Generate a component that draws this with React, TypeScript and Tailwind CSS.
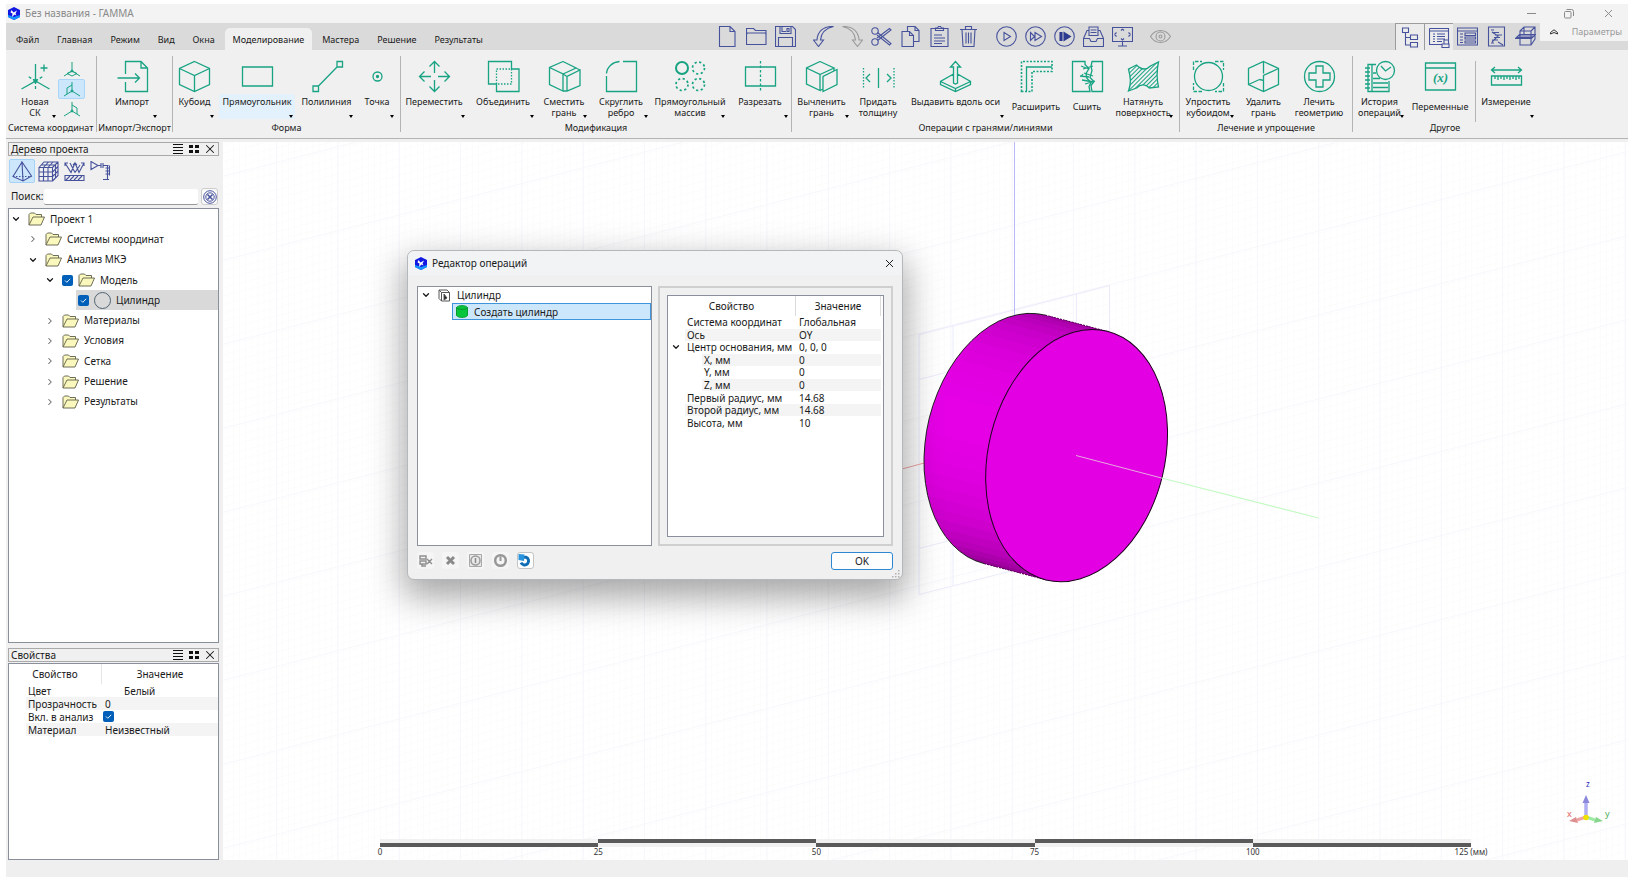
import { useState, type ReactNode } from 'react';
import { ChevronDown, ChevronRight, X } from 'lucide-react';

/* ---------- Icons ---------- */

const RibbonIcon = ({ children }: { children: ReactNode }) => (
  <svg width="31" height="31" viewBox="0 0 31 31" fill="none" stroke="#18a383" strokeWidth="1.3" className="shrink-0 overflow-visible">
    {children}
  </svg>
);

const ToolIcon = ({ children, muted = false }: { children: ReactNode; muted?: boolean }) => (
  <svg width="21" height="21" viewBox="0 0 21 21" fill="none" stroke={muted ? '#9a9a9a' : '#46529c'} strokeWidth="1.1" className="shrink-0">
    {children}
  </svg>
);

const icons: Record<string, ReactNode> = {
  newCs: (
    <>
      <path d="M15.500 3v17L1.500 28M15.500 20l14 8M24 3.500v7M20.500 7h7" />
      <path d="M15.500 20l-8-5M15.500 20l8-5M15.500 20v8" strokeDasharray="3 2" />
      <circle cx="15.500" cy="20" r="1.400" fill="#18a383" />
    </>
  ),
  import: <path d="M8.500 13V.5H24l6.500 6.500v23.500h-22V21M24 .5V7h6.500M.5 17h22M18 12.500l4.500 4.500-4.500 4.500" />,
  cuboid: <path d="M15.500.5L30.500 7.500v16l-15 7-15-7v-16zM.5 7.500l15 7 15-7M15.500 14.500v16" />,
  rect: <path d="M.5 6h30v19H.5z" />,
  polyline: <path d="M2 25h5.500v5.500H2zM26 .5h5.500V6H26zM7.500 25L26 6" />,
  point: (
    <>
      <circle cx="15.500" cy="15.500" r="4.500" />
      <circle cx="15.500" cy="15.500" r="1" fill="#18a383" />
    </>
  ),
  move: <path d="M15.500 12V.5M10.500 5.500l5-5 5 5M15.500 19v11.500M10.500 25.500l5 5 5-5M12 15.500H.5M5.500 10.500l-5 5 5 5M19 15.500h11.500M25.500 10.500l5 5-5 5" />,
  union: (
    <>
      <path d="M.5.5h23V8h7.500v22.500H8.500V23H.5z" />
      <path d="M8.500 8h15v15h-15z" strokeDasharray="1.500 1.500" />
    </>
  ),
  shiftFace: (
    <path d="M14 .5L.5 6.500v17L14 30V13L.5 6.500M14 .5l13 6.500L14 13M18 30V15.500l13-6.500v15.500L18 30h-4M27 7l4 2M18 15.500L14 13" />
  ),
  fillet: <path d="M.5 15v15.500h30V.5H17M.5 12.500C1 6 6.500 1 13.500.5" />,
  array: (
    <>
      <circle cx="7" cy="7" r="6" strokeWidth="2" />
      <circle cx="23.500" cy="7" r="6" strokeWidth="1.700" strokeDasharray="2.200 2.500" />
      <circle cx="7" cy="23.500" r="6" strokeWidth="1.700" strokeDasharray="2.200 2.500" />
      <circle cx="23.500" cy="23.500" r="6" strokeWidth="1.700" strokeDasharray="2.200 2.500" />
    </>
  ),
  cut: (
    <>
      <path d="M.5 6h30v19H.5z" />
      <path d="M15.500 0v31" strokeDasharray="2.500 2" />
    </>
  ),
  extractFace: (
    <path d="M14 .5L.5 7v16L14 29.500V13.500L.5 7M14 .5L28 7l-14 6.500M17 30.500v-15L31 8.500v15zM28 7v2.500M14 29.500l3-1.500" />
  ),
  thickness: (
    <>
      <path d="M.5 7v20M31 7v20" strokeDasharray="1.500 1.500" />
      <path d="M15.500 7v20M7 13l-4 4 4 4M24 13l4 4-4 4" />
    </>
  ),
  extrude: (
    <path d="M13.500 13L.5 20.500v3l15 7 15-7v-3L17.500 13M.5 20.500l15 7 15-7M15.500 27.500v3M13.500 22V6h-3l5-5.500 5 5.500h-3v16l-2 1z" />
  ),
  expand: (
    <>
      <path d="M.5 30.500V.5h30.500v10H11v20z" strokeDasharray="2 1.500" strokeWidth="1.600" />
      <path d="M5.500 30.500V6h25.500" />
    </>
  ),
  sew: (
    <>
      <path d="M13 .5H.5v30H18l-1-5 2-4-4-4-1-5 3-5-4-4zM20 .5h10.500v30H20l-1-6 3-4-4-4 2-7-1-4z" />
      <path d="M9 5l8 3M11 8l10-3M8 15l9 1M12 12l9 3M10 19l12 2M13 23l10-3M11 13l-2 3" />
    </>
  ),
  stretch: <path d="M.5 8l8-4c5 5 10 5 14 1l8-4c-2 9-2 16 0 25l-9 1c-4-4-9-4-13 0L.5 30c3-8 2-14 0-22z" fill="url(#hatch)" />,
  simplify: (
    <>
      <circle cx="15.500" cy="15.500" r="14" />
      <path d="M.5 9V.5H9M22 .5h8.500V9M30.500 22v8.500H22M9 30.500H.5V22" strokeDasharray="3.500 1.500" />
    </>
  ),
  deleteFace: <path d="M15.500.5l15 7v16l-15 7-15-7v-16zM15.500.5v12M15.500 18v12.500M.5 23.500l11-5M30.500 7.500l-15 7v5l-4-1" />,
  heal: (
    <>
      <circle cx="15.500" cy="15.500" r="15" />
      <path d="M12 5h7v7h7v7h-7v7h-7v-7H5v-7h7z" />
    </>
  ),
  history: (
    <>
      <path d="M12 3.500H4v27h21V20M8 3.500v27M12 12h-3M9 17.500h7M9 22h15M9 26.500h15" />
      <path d="M1 7h5M1 11h5M1 15h5M1 19h5M1 23h5M1 27h5" />
      <circle cx="21.500" cy="9.500" r="9" />
      <path d="M17 5l4.500 5L27 6" />
    </>
  ),
  variables: (
    <>
      <path d="M.5 2h30v27H.5zM.5 7h30" />
      <text x="15.500" y="21" textAnchor="middle" stroke="none" fill="#18a383" className="font-['Liberation_Serif',serif] text-[13px] font-bold italic">
        (x)
      </text>
    </>
  ),
  measure: (
    <path d="M.5 9h30M4 6L.5 9 4 12M27 6l3.500 3L27 12M.5 15h30v9H.5zM4 15v3M7 15v4M10 15v3M13 15v4M16 15v3M19 15v4M22 15v3M25 15v4M28 15v3" />
  ),
};

const AppLogo = () => (
  <svg width="12" height="13" viewBox="0 0 12 13" className="shrink-0">
    <path d="M6 0l6 3v7l-6 3-6-3V3z" fill="#1219e0" />
    <path d="M0 8l6 2 6-2v2l-6 3-6-3z" fill="#1595ff" />
    <path d="M3.500 3l2 2.500 3.500-2-1.500 3 1 2-2-1-2.500 2.500.5-3.500-2-1z" fill="#fff" />
  </svg>
);

const Folder = () => (
  <svg width="17" height="14" viewBox="0 0 17 14" className="shrink-0" fill="#fbf8bd" stroke="#5f5f4a" strokeWidth="0.900">
    <path d="M1 13V2.500L2.500 1h4L8 2.500h5.500V5" />
    <path d="M1 13L5 5h11.500l-3.500 8z" />
  </svg>
);

/* ---------- Small controls ---------- */

const Check = ({ label }: { label: string }) => (
  <label className="grid shrink-0 place-items-center" aria-label={label}>
    <input type="checkbox" defaultChecked aria-label={label} className="size-[11px] appearance-none rounded-[2px] bg-[#bbb] [grid-area:1/1] checked:bg-[#005fb8]" />
    <svg width="7" height="7" viewBox="0 0 7 7" className="pointer-events-none [grid-area:1/1]" fill="none" stroke="#fff" strokeWidth="0.900">
      <path d="M1 3.500l1.800 1.800L6.200 1.800" />
    </svg>
  </label>
);

const Arrow = () => <span className="absolute right-[2px] bottom-[1px] border-x-[2px] border-t-[3px] border-x-transparent border-t-black" />;

interface RibbonItem {
  icon: string;
  lines: string[];
  width: string;
  arrow?: boolean;
  low?: boolean;
  active?: boolean;
}

const RibbonButton = ({ icon, lines, width, arrow, low, active }: RibbonItem) => (
  <button className={`flex shrink-0 flex-col items-center ${width}`}>
    <RibbonIcon>{icons[icon]}</RibbonIcon>
    <span
      className={`relative mt-[2px] flex h-[25px] w-full flex-col items-center whitespace-nowrap leading-[11px] ${low ? 'justify-center' : 'pt-[2px]'} ${active ? 'rounded-[2px] bg-[#e3f1fc]' : ''
        }`}
    >
      {lines.map(line => (
        <span key={line}>{line}</span>
      ))}
      {arrow && <Arrow />}
    </span>
  </button>
);

interface RibbonGroup {
  title: string;
  width: string;
  items: RibbonItem[];
}

const groups: RibbonGroup[] = [
  {
    title: 'Импорт/Экспорт',
    width: 'w-[76px]',
    items: [{ icon: 'import', lines: ['Импорт'], width: 'ml-[8px] w-[54px]', arrow: true }],
  },
  {
    title: 'Форма',
    width: 'w-[228px]',
    items: [
      { icon: 'cuboid', lines: ['Кубоид'], width: 'w-[43px]', arrow: true },
      { icon: 'rect', lines: ['Прямоугольник'], width: 'w-[76px]', arrow: true, active: true },
      { icon: 'polyline', lines: ['Полилиния'], width: 'w-[57px]', arrow: true },
      { icon: 'point', lines: ['Точка'], width: 'w-[38px]', arrow: true },
    ],
  },
  {
    title: 'Модификация',
    width: 'w-[391px]',
    items: [
      { icon: 'move', lines: ['Переместить'], width: 'w-[66px]', arrow: true },
      { icon: 'union', lines: ['Объединить'], width: 'w-[66px]', arrow: true },
      { icon: 'shiftFace', lines: ['Сместить', 'грань'], width: 'w-[50px]', arrow: true },
      { icon: 'fillet', lines: ['Скруглить', 'ребро'], width: 'w-[58px]', arrow: true },
      { icon: 'array', lines: ['Прямоугольный', 'массив'], width: 'w-[74px]', arrow: true },
      { icon: 'cut', lines: ['Разрезать'], width: 'w-[60px]', arrow: true },
    ],
  },
  {
    title: 'Операции с гранями/линиями',
    width: 'w-[388px]',
    items: [
      { icon: 'extractFace', lines: ['Вычленить', 'грань'], width: 'w-[59px]', arrow: true },
      { icon: 'thickness', lines: ['Придать', 'толщину'], width: 'w-[48px]' },
      { icon: 'extrude', lines: ['Выдавить вдоль оси'], width: 'w-[101px]', arrow: true },
      { icon: 'expand', lines: ['Расширить'], width: 'w-[54px]', low: true },
      { icon: 'sew', lines: ['Сшить'], width: 'w-[42px]', low: true },
      { icon: 'stretch', lines: ['Натянуть', 'поверхность'], width: 'w-[64px]', arrow: true },
    ],
  },
  {
    title: 'Лечение и упрощение',
    width: 'w-[173px]',
    items: [
      { icon: 'simplify', lines: ['Упростить', 'кубоидом'], width: 'w-[56px]', arrow: true },
      { icon: 'deleteFace', lines: ['Удалить', 'грань'], width: 'w-[49px]' },
      { icon: 'heal', lines: ['Лечить', 'геометрию'], width: 'w-[56px]' },
    ],
  },
  {
    title: 'Другое',
    width: 'w-[185px]',
    items: [
      { icon: 'history', lines: ['История', 'операций'], width: 'w-[53px]', arrow: true },
      { icon: 'variables', lines: ['Переменные'], width: 'w-[62px]', low: true },
      { icon: 'measure', lines: ['Измерение'], width: 'ml-px w-[61px] border-l border-[#b4b4b4]', arrow: true },
    ],
  },
];

const tabs = ['Файл', 'Главная', 'Режим', 'Вид', 'Окна', 'Моделирование', 'Мастера', 'Решение', 'Результаты'];

const quickTools: { label: string; muted?: boolean; icon: ReactNode }[][] = [
  [
    { label: 'Создать', icon: <path d="M2.500.5h10.500l5 5v15h-15.500zM13 .5v5h5" /> },
    { label: 'Открыть', icon: <path d="M.5 18.500v-16h7l2 2h10.500v14zM.5 8.500l1-1.500h18l.500 1.500" /> },
    { label: 'Сохранить', icon: <path d="M.5.5h17l3 3v17H.5zM5 .5v7h11v-7M12 2.500h2v3h-2zM3.500 20.500v-9h14v9M7 .5v5h4" /> },
  ],
  [
    { label: 'Отменить', icon: <path d="M20.500.5C11 0 4.500 5 4 14H.5l5 6.500 5-6.500H7.500C8 7.500 12 2.500 20.500.5z" /> },
    { label: 'Повторить', muted: true, icon: <path d="M.5.5C10 0 16.500 5 17 14h3.500l-5 6.500-5-6.500h3C13 7.500 9 2.500.5.5z" /> },
    {
      label: 'Вырезать',
      icon: (
        <>
          <circle cx="4" cy="5" r="3.200" />
          <circle cx="4" cy="16" r="3.200" />
          <path d="M6.500 6.500l13.500 11-1.500 1.500L6 9M6.500 14.500L20 4l-1.500-1.500L6 12" />
        </>
      ),
    },
    { label: 'Копировать', icon: <path d="M7.500 5.500v-5h7.500l4 4v11h-5.500M15 .5v4h4M2 5.500h7.500l4 4v11H2zM9.500 5.500v4h4" /> },
    { label: 'Вставить', icon: <path d="M2 2.500h17v18H2zM6.500 4.500V2h2l1-1.500h2l1 1.500h2v2.500zM5 9h8M5 12h11M5 15h11M5 17.500h8" /> },
    { label: 'Удалить', icon: <path d="M2 3.500h17M7.500 3.500v-3h6v3M4 3.500l1 17h11l1-17M8 6.500v11M10.500 6.500v11M13 6.500v11" /> },
  ],
  [
    {
      label: 'Запуск',
      icon: (
        <>
          <circle cx="10.500" cy="10.500" r="9.800" />
          <path d="M8 6.500l6.500 4-6.500 4z" />
        </>
      ),
    },
    {
      label: 'Быстрый запуск',
      icon: (
        <>
          <circle cx="10.500" cy="10.500" r="9.800" />
          <path d="M5.500 6.500l4 4-4 4zM10 6.500l6.500 4-6.500 4z" />
        </>
      ),
    },
    {
      label: 'Полный запуск',
      icon: (
        <>
          <circle cx="10.500" cy="10.500" r="9.800" />
          <path d="M6 6.500h2v8H6zM10 6.500l6.500 4-6.500 4z" fill="#2c3a90" stroke="#2c3a90" />
        </>
      ),
    },
    { label: 'Архив', icon: <path d="M.5 12.500L4 4.500h2V1h9v3.500h2l3.500 8v8H.5zM.5 12.500h6l1.500 3h5l1.500-3h6M6 4.500v5h9v-5M7.500 4h6M7.500 6.500h6" /> },
    { label: 'Во весь экран', icon: <path d="M.5 1.500h20v14H.5zM10.500 15.500v4.500M6 20h9M2.500 8.500l2-2M2.500 8.500l2 2M18.500 8.500l-2-2M18.500 8.500l-2 2M10.500 3l-1.500 1.500M10.500 3l1.500 1.500M10.500 14L9 12.500M10.500 14l1.500-1.500" /> },
  ],
  [
    {
      label: 'Вид',
      muted: true,
      icon: (
        <>
          <path d="M.5 10.500c5-8 15-8 20 0-5 8-15 8-20 0z" />
          <circle cx="10.500" cy="10.500" r="4.500" />
          <circle cx="10.500" cy="10.500" r="1.500" />
        </>
      ),
    },
  ],
];

const panelTools: { label: string; pressed?: boolean; icon: ReactNode }[] = [
  { label: 'Дерево', pressed: true, icon: <path d="M2.500 1h6v4.500h-6zM10.500 8h7v4.500h-7zM10.500 15.500h7V20h-7zM5.500 5.500V18h5M5.500 10.500h5" /> },
  { label: 'Свойства', pressed: true, icon: <path d="M.5 1.500h19v11M.5 1.500v16H13M.5 4h19M4 7h2M8 7h8M4 9.500h2M8 9.500h8M4 12h2M8 12h8M4 14.500h2M8 14.500h5M15 13h4.500v4H15zM13 17h7v3.500h-7z" /> },
  { label: 'Таблица', icon: <path d="M.5 2h20v17H.5zM.5 5h20M3 8h3M3 11h3M3 14h3M3 16.500h3M8 7h10.500v2.500H8zM8 11h10.500v2H8zM8 15h10.500v2H8z" /> },
  { label: 'Журнал', icon: <path d="M2.500 1H18.500v19H2.500zM5 4h3M6 6.500h7M9 9h7M8 11.500h6M6 14h6M5 17h3M6 6l6 4-6 6M12 16l5 3" /> },
  { label: 'Сечение', icon: <path d="M5 5l4-4h11v12l-4 6H5zM5 5h11v14M16 5l4-4M.5 12.500l4-4h16l-4 4zM2 11.500h16M3 10h16M9 1v7" /> },
];

/* ---------- Project tree ---------- */

interface TreeRow {
  label: string;
  indent: string;
  open?: boolean;
  checked?: boolean;
  leaf?: boolean;
}

const treeRows: TreeRow[] = [
  { label: 'Проект 1', indent: 'pl-[2px]', open: true },
  { label: 'Системы координат', indent: 'pl-[19px]' },
  { label: 'Анализ МКЭ', indent: 'pl-[19px]', open: true },
  { label: 'Модель', indent: 'pl-[36px]', open: true, checked: true },
  { label: 'Цилиндр', indent: 'pl-[67px]', checked: true, leaf: true },
  { label: 'Материалы', indent: 'pl-[36px]' },
  { label: 'Условия', indent: 'pl-[36px]' },
  { label: 'Сетка', indent: 'pl-[36px]' },
  { label: 'Решение', indent: 'pl-[36px]' },
  { label: 'Результаты', indent: 'pl-[36px]' },
];

const TreeItem = ({ label, indent, open, checked, leaf }: TreeRow) => (
  <li className={`flex items-center ${indent}`}>
    <div className={`flex items-center gap-[5px] ${leaf ? 'h-full flex-1 bg-[#d9d9d9] pl-[2px]' : ''}`}>
      {!leaf &&
        (open ? <ChevronDown size={10} strokeWidth={3} className="mr-[2px]" /> : <ChevronRight size={10} strokeWidth={2.5} className="mr-[2px] text-[#666]" />)}
      {checked && <Check label={label} />}
      {leaf ? <span className="size-[17px] rounded-full border border-[#4f6272]" /> : <Folder />}
      <span>{label}</span>
    </div>
  </li>
);

const PanelTitle = ({ title }: { title: string }) => (
  <div className="flex h-[14px] items-center border border-[#a9a9a9] pl-[2px] text-[10px] leading-[12px]">
    <h2 className="flex-1">{title}</h2>
    <button aria-label="Меню панели" className="px-[3px]">
      <svg width="10" height="10" viewBox="0 0 10 10" stroke="#111" strokeWidth="1">
        <path d="M0 .5h10M0 3.500h10M0 6.500h10M0 9.500h10" />
      </svg>
    </button>
    <button aria-label="Открепить" className="px-[3px]">
      <svg width="10" height="8" viewBox="0 0 10 8" fill="#111">
        <path d="M0 0h4v3H0zM6 0h4v3H6zM0 5h4v3H0zM6 5h4v3H6z" />
      </svg>
    </button>
    <button aria-label="Закрыть" className="px-px">
      <X size={14} strokeWidth={1.8} />
    </button>
  </div>
);

const LeftDock = () => (
  <aside className="flex w-[211px] shrink-0 flex-col">
    <PanelTitle title="Дерево проекта" />
    <div className="flex pt-[3px] pl-px">
      <button aria-label="Геометрия" className="grid h-6 w-[26px] place-items-center rounded-[2px] border border-[#a5d3f7] bg-[#cce6fb]">
        <ToolIcon>
          <path d="M10 1L1 15.500l10 4.500 8.500-5L10 1l1 19" />
          <path d="M1 15.500h18.500" strokeDasharray="1.500 1.500" />
        </ToolIcon>
      </button>
      <button aria-label="Сетка" className="grid h-6 w-[26px] place-items-center">
        <ToolIcon>
          <path d="M1 6.500h13.500V20H1zM1 6.500L6 1h14v13.500L14.500 20M14.500 6.500L20 1M5.500 6.500V20M10 6.500V20M1 11h13.500M1 15.500h13.500M5.500 6.500L10.500 1M10 6.500L15 1M14.500 11L20 5.500M14.500 15.500L20 10M17.500 4v13M3.500 4h14" />
        </ToolIcon>
      </button>
      <button aria-label="Условия" className="grid h-6 w-[26px] place-items-center">
        <ToolIcon>
          <path d="M1 2l6 9.500L11 2l4 9.500 5-9.500M1 5V2h3M9 4l2-2 2 2M17 2h3v3M6 2l5 9.500M16 4l-5 7.500M1 14.500h19v5H1zM2 19l4-4M6 19l4-4M10 19l4-4M14 19l4-4" />
        </ToolIcon>
      </button>
      <button aria-label="Схема" className="grid h-6 w-[26px] place-items-center">
        <ToolIcon>
          <path d="M1 .5v8l7-4zM8 4.500h3M11 2v5M13 2v5M13 4.500h5.500M17.500 4.500v14M19.500 4.500v10M15.500 7h4M15.500 10h4M15.500 13h4M13 18.500h6" />
        </ToolIcon>
      </button>
    </div>
    <div className="flex items-center pt-[5px] pb-[3px] pl-[3px] text-[10px]">
      <label htmlFor="tree-search" className="w-[33px]">Поиск:</label>
      <input id="tree-search" type="text" className="h-4 min-w-0 flex-1 rounded-[2px] border-b border-[#999] bg-white px-1 outline-none" />
      <button aria-label="Очистить поиск" className="mr-px ml-[3px] grid size-[17px] place-items-center rounded-[3px] border border-[#ccc] bg-[#fbfbfb]">
        <svg width="14" height="14" viewBox="0 0 14 14" fill="none" stroke="#46529c">
          <circle cx="7" cy="7" r="6.300" />
          <circle cx="7" cy="7" r="4.200" />
          <path d="M4.500 4.500l5 5M9.500 4.500l-5 5" strokeWidth="1.500" />
        </svg>
      </button>
    </div>
    <div className="min-h-0 flex-1 overflow-hidden border border-[#8a8f9c] bg-white">
      <ul className="grid h-[203px] auto-rows-fr text-[10px]">
        {treeRows.map(row => (
          <TreeItem key={row.label} {...row} />
        ))}
      </ul>
    </div>
    <div className="mt-[5px]">
      <PanelTitle title="Свойства" />
    </div>
    <div className="mt-px h-[197px] border border-[#8a8f9c] bg-white text-[10px] leading-[12px]">
      <table className="w-full table-fixed border-separate border-spacing-0">
        <thead>
          <tr className="h-5">
            <th className="w-[17px]" />
            <th className="w-[76px] border-r border-[#e5e5e5] pr-[17px] text-center font-normal">Свойство</th>
            <th className="text-center font-normal">Значение</th>
          </tr>
        </thead>
        <tbody className="[&_td]:h-[13px] [&_td]:py-0">
          <tr>
            <td />
            <td className="pl-[2px]">Цвет</td>
            <td className="pl-[22px]">Белый</td>
          </tr>
          <tr>
            <td />
            <td className="bg-[#f4f4f4] pl-[2px]">Прозрачность</td>
            <td className="bg-[#f4f4f4] pl-[3px]">0</td>
          </tr>
          <tr>
            <td />
            <td className="pl-[2px]">Вкл. в анализ</td>
            <td>
              <div className="flex pl-px">
                <Check label="Вкл. в анализ" />
              </div>
            </td>
          </tr>
          <tr>
            <td />
            <td className="bg-[#f4f4f4] pl-[2px]">Материал</td>
            <td className="bg-[#f4f4f4] pl-[3px]">Неизвестный</td>
          </tr>
        </tbody>
      </table>
    </div>
  </aside>
);

/* ---------- 3D scene ---------- */

const FACETS = 30;
const front = { x: 1076.6, y: 455.6 };
const back = { x: 1014.9, y: 439.4 };
const TILT = (13.8 * Math.PI) / 180;

const rim = (c: { x: number; y: number }, deg: number) => {
  const t = (deg * Math.PI) / 180;
  const u = 88.2 * Math.cos(t);
  const v = 128 * Math.sin(t);
  return `${(c.x + u * Math.cos(TILT) - v * Math.sin(TILT)).toFixed(1)},${(c.y + u * Math.sin(TILT) + v * Math.cos(TILT)).toFixed(1)}`;
};

const facets = Array.from({ length: FACETS }, (_, i) => {
  const a = 90 + (i * 180) / FACETS;
  const b = a + 180 / FACETS;
  const light = Math.abs(Math.cos((((a + b) / 2 - 184) * Math.PI) / 180));
  const level = Math.round(128 + 101 * Math.pow(light, 0.65));
  return { points: `${rim(back, a)} ${rim(back, b)} ${rim(front, b)} ${rim(front, a)}`, color: `rgb(${level},0,${level})` };
});

const Scene = () => (
  <svg className="absolute inset-0 size-full" viewBox="223 142 1405 718" preserveAspectRatio="xMidYMid slice">
    <defs>
      <pattern id="minor" width="6.130" height="8.400" patternUnits="userSpaceOnUse" patternTransform="skewY(-14.4)">
        <path d="M0 0H6.130M0 0V8.400" stroke="#fafafb" strokeWidth="1" fill="none" />
      </pattern>
      <pattern id="major" x="31" y="65" width="61.300" height="84" patternUnits="userSpaceOnUse" patternTransform="skewY(-14.4)">
        <path d="M0 0H61.300M0 0V84" stroke="#f5f5fb" strokeWidth="1.500" fill="none" />
      </pattern>
    </defs>
    <rect x="223" y="142" width="1405" height="718" fill="url(#minor)" />
    <rect x="223" y="142" width="1405" height="718" fill="url(#major)" />
    <g fill="none" stroke="#ebebfc">
      <path d="M919 334.500L1109.500 285.500V546L919 594.500zM953 326v259M1076.500 294v260M919 379.500l190-49M919 548.500l190-49" />
    </g>
    <path d="M1014.500 142v180" stroke="#b9b9fa" />
    <path d="M902 469l24-6.500" stroke="#f0a0a0" />
    <g shapeRendering="crispEdges">
      {facets.map(f => (
        <polygon key={f.points} points={f.points} fill={f.color} />
      ))}
    </g>
    <polyline fill="none" stroke="#222" strokeWidth="1" points={Array.from({ length: FACETS + 1 }, (_, i) => rim(back, 90 + (i * 180) / FACETS)).join(' ')} />
    <path d={`M${rim(back, 90)}L${rim(front, 90)}M${rim(back, 270)}L${rim(front, 270)}`} stroke="#5a005a" strokeDasharray="2 1" />
    <ellipse cx={front.x} cy={front.y} rx="88.200" ry="128" transform={`rotate(13.8 ${front.x} ${front.y})`} fill="#e300e3" stroke="#1c001c" strokeWidth="1" />
    <path d="M1076 455.500L1161.500 478" stroke="#e7a9e0" />
    <path d="M1161.500 478L1318.500 518" stroke="#c3fac3" strokeWidth="1.200" />
    {/* Orientation triad */}
    <g>
      <path d="M1586 817v-15" stroke="#b0aef2" strokeWidth="3.500" />
      <path d="M1582.500 803l3.500-8 3.500 8z" fill="#8b88dc" />
      <path d="M1586 817l-9 3" stroke="#eea3a3" strokeWidth="3" />
      <path d="M1569 821l7-4 2 6z" fill="#dd8f8f" />
      <path d="M1586 817l9 3" stroke="#9eeaa4" strokeWidth="3" />
      <path d="M1603 821l-7-4-2 6z" fill="#86d68d" />
      <circle cx="1586" cy="817.500" r="2.800" fill="#efe000" />
      <text x="1586" y="787" className="text-[8px]" fill="#2a2ac0">z</text>
      <text x="1567" y="817" className="text-[9px]" fill="#e06060">x</text>
      <text x="1605" y="817" className="text-[9px]" fill="#50b060">y</text>
    </g>
  </svg>
);

const Ruler = () => (
  <div className="absolute right-[157px] bottom-[4px] left-[157px] text-[8px] leading-[9px] text-[#333]">
    <div className="flex h-2 bg-[#f1f1f1]">
      {[0, 25, 50, 75, 100].map((mark, i) => (
        <span key={mark} className={`h-1 flex-1 bg-[#5a5a5a] ${i % 2 === 0 ? 'self-end' : 'self-start'}`} />
      ))}
    </div>
    <div className="flex">
      {[0, 25, 50, 75, 100].map(mark => (
        <span key={mark} className="flex-1">
          <span className="inline-block -translate-x-1/2">{mark}</span>
        </span>
      ))}
      <span className="w-0 whitespace-nowrap">
        <span className="inline-block -translate-x-1/2">125 (мм)</span>
      </span>
    </div>
  </div>
);

/* ---------- Operations dialog ---------- */

const operationProps: { name: string; value: string; nested?: boolean; open?: boolean }[] = [
  { name: 'Система координат', value: 'Глобальная' },
  { name: 'Ось', value: 'OY' },
  { name: 'Центр основания, мм', value: '0, 0, 0', open: true },
  { name: 'X, мм', value: '0', nested: true },
  { name: 'Y, мм', value: '0', nested: true },
  { name: 'Z, мм', value: '0', nested: true },
  { name: 'Первый радиус, мм', value: '14.68' },
  { name: 'Второй радиус, мм', value: '14.68' },
  { name: 'Высота, мм', value: '10' },
];

const dialogTools: { label: string; active?: boolean; icon: ReactNode }[] = [
  { label: 'Удалить с зависимыми', icon: <path d="M1 2h6v3H1zM1 7h6v3H1zM3 10v2h4M8 5l5 5M13 5l-5 5" stroke="#8e8e8e" strokeWidth="1.400" /> },
  { label: 'Удалить', icon: <path d="M3 3l7 7M10 3l-7 7" stroke="#8a8a8a" strokeWidth="3" /> },
  {
    label: 'Сведения',
    icon: (
      <>
        <path d="M.5.5h12v12H.5z" fill="#e9e9e9" stroke="#a8a8a8" />
        <circle cx="6.500" cy="6.500" r="4.500" stroke="#9a9a9a" strokeWidth="1.500" />
        <path d="M6.500 4v5" stroke="#8a8a8a" strokeWidth="1.500" />
      </>
    ),
  },
  {
    label: 'Отключить',
    icon: (
      <>
        <circle cx="6.500" cy="6.500" r="5.300" stroke="#979797" strokeWidth="2.500" />
        <path d="M6.500 2.500v4.500" stroke="#979797" strokeWidth="2" />
      </>
    ),
  },
  {
    label: 'Обновить',
    active: true,
    icon: (
      <>
        <path d="M3 3.200h4a4 4 0 1 1-5 5.500" stroke="#0f6db5" strokeWidth="3" />
        <path d="M-.5 0l6 .5L5 7-.5 6z" fill="#2a93dd" />
      </>
    ),
  },
];

const OperationsDialog = ({ onClose }: { onClose: () => void }) => (
  <section
    role="dialog"
    aria-label="Редактор операций"
    className="absolute top-[108px] left-[184px] flex h-[330px] w-[496px] flex-col rounded-[7px] border border-[#b5b8bb] bg-[#f0f0f0] text-[10px] leading-[12px] shadow-[0_14px_34px_4px_rgba(0,0,0,0.34)]"
  >
    <header className="flex h-[24px] shrink-0 items-center gap-[5px] rounded-t-[7px] bg-[#f1f3f5] pr-[6px] pl-[7px]">
      <AppLogo />
      <h2 className="flex-1">Редактор операций</h2>
      <button aria-label="Закрыть окно" onClick={onClose}>
        <X size={13} strokeWidth={1.8} />
      </button>
    </header>
    <div className="grid min-h-0 flex-1 grid-cols-2 gap-[6px] px-[9px] pt-[11px]">
      <div className="border border-[#8a8f9c] bg-white">
        <div className="flex h-4 items-center pl-[3px]">
          <ChevronDown size={10} strokeWidth={3} />
          <svg width="13" height="13" viewBox="0 0 13 13" fill="none" stroke="#555" className="ml-[7px]">
            <path d="M3.500 3.500h8v8.500h-8zM1 1h8l2.500 2.500M1 1v8.500L3.500 12M1 1l2.500 2.500" />
            <path d="M6 5v6l3-2z" fill="#222" />
          </svg>
          <span className="ml-[6px]">Цилиндр</span>
        </div>
        <div className="ml-[34px] flex h-[17px] items-center gap-[6px] border border-[#3f95dc] bg-[#cce7fc] pl-[3px]">
          <svg width="12" height="13" viewBox="0 0 12 13">
            <path d="M.5 2.500v8C2 13 10 13 11.500 10.500v-8C10 0 2 0 .5 2.500z" fill="#08c63c" stroke="#0a9a34" />
            <path d="M.5 2.500C2 5 10 5 11.500 2.500" fill="none" stroke="#0a8f30" />
          </svg>
          <span>Создать цилиндр</span>
        </div>
      </div>
      <div className="border-2 border-[#cfcfcf] p-[7px]">
        <div className="h-full border border-[#8a8f9c] bg-white pr-[2px]">
          <table className="h-[133px] w-full table-fixed border-separate border-spacing-0">
            <thead>
              <tr className="h-5">
                <th className="w-[17px]" />
                <th className="w-[111px] border-r border-[#dcdcdc] pr-[17px] text-center font-normal">Свойство</th>
                <th className="border-r border-[#dcdcdc] text-center font-normal">Значение</th>
              </tr>
            </thead>
            <tbody>
              {operationProps.map((row, i) => (
                <tr key={row.name}>
                  <td className="p-0">{row.open && <ChevronDown size={10} strokeWidth={3} className="ml-[3px]" />}</td>
                  <td
                    className={`p-0 whitespace-nowrap ${row.nested ? 'border-l-[17px] border-white' : ''} ${i % 2 ? 'bg-[#f4f4f4]' : ''}`}
                  >
                    <span className="block pl-[2px]">{row.name}</span>
                  </td>
                  <td className={`p-0 ${i % 2 ? 'bg-[#f4f4f4]' : ''}`}>
                    <span className="block pl-[3px]">{row.value}</span>
                  </td>
                </tr>
              ))}
            </tbody>
          </table>
        </div>
      </div>
    </div>
    <footer className="flex h-[33px] shrink-0 items-center gap-[8px] px-[9px] pb-[4px]">
      {dialogTools.map(tool => (
        <button
          key={tool.label}
          aria-label={tool.label}
          className={`grid size-[17px] place-items-center rounded-[3px] ${tool.active ? 'border border-[#c4c4c4] bg-[#fdfdfd]' : 'bg-[#f5f5f5]'}`}
        >
          <svg width="13" height="13" viewBox="0 0 13 13" fill="none" className="overflow-visible">
            {tool.icon}
          </svg>
        </button>
      ))}
      <button onClick={onClose} className="ml-auto h-[18px] w-[62px] rounded-[3px] border border-[#2d87d3] bg-[#fdfdfd]">
        OK
      </button>
    </footer>
    <svg width="8" height="8" viewBox="0 0 8 8" className="absolute right-[2px] bottom-px" fill="#b0b0b0">
      <path d="M6 0h1.500v1.500H6zM6 3h1.500v1.500H6zM6 6h1.500v1.500H6zM3 3h1.500v1.500H3zM3 6h1.500v1.500H3zM0 6h1.500v1.500H0z" />
    </svg>
  </section>
);

/* ---------- Ribbon ---------- */

const csIcons = [
  { label: 'Плоскость XY', d: 'M10 0v9M10 9L2 14M10 9l8 5M5 11.500l5 2.500 5-2.500-5-2.500z' },
  { label: 'Плоскость XZ', d: 'M10 0v9M10 9L2 14M10 9l8 5M10 3L5 6v6' },
  { label: 'Плоскость YZ', d: 'M10 0v9M10 9L2 14M10 9l8 5M10 3l5 3v6' },
];

const Ribbon = () => (
  <div className="flex h-[89px] shrink-0 overflow-hidden border-b border-[#b4b4b4] bg-[#f0f0f0] pt-[6px] pl-[2px] text-[9px] leading-[11px]">
    <div className="flex w-[88px] shrink-0 flex-col">
      <div className="flex h-[66px] items-start pt-[3px] pl-[4px]">
        <div className="pt-[2px]">
          <RibbonButton icon="newCs" lines={['Новая', 'СК']} width="w-[46px]" arrow />
        </div>
        <div className="flex w-[27px] flex-col">
          {csIcons.map((cs, i) => (
            <button key={cs.label} aria-label={cs.label} className={`grid h-5 place-items-center ${i === 1 ? 'rounded-[2px] border border-[#a9d6f8] bg-[#cce6fb]' : ''}`}>
              <svg width="20" height="15" viewBox="0 0 20 15" fill="none" stroke="#18a383">
                <path d={cs.d} />
                <circle cx="10" cy="9" r="1" fill="#18a383" />
              </svg>
            </button>
          ))}
        </div>
      </div>
      <span className="whitespace-nowrap">Система координат</span>
    </div>
    {groups.map(group => (
      <div key={group.title} className={`flex h-[76px] shrink-0 flex-col border-l border-[#b4b4b4] ${group.width}`}>
        <div className="flex h-[66px] shrink-0 gap-[3px] pt-[5px]">
          {group.items.map(item => (
            <RibbonButton key={item.icon} {...item} />
          ))}
        </div>
        <span className="text-center whitespace-nowrap">{group.title}</span>
      </div>
    ))}
  </div>
);

const App = () => {
  const [activeTab, setActiveTab] = useState('Моделирование');
  const [dialogOpen, setDialogOpen] = useState(true);

  return (
    <div className="h-screen overflow-hidden bg-white pt-1 pr-[7px] pb-[9px] pl-[6px] font-['Noto_Sans',sans-serif] text-[10px] text-[#1a1a1a]">
      <svg width="0" height="0" className="absolute">
        <defs>
          <pattern id="hatch" width="3" height="3" patternUnits="userSpaceOnUse" patternTransform="rotate(45)">
            <path d="M0 0V3" stroke="#18a383" strokeWidth="2" />
          </pattern>
        </defs>
      </svg>
      <div className="flex h-full flex-col bg-[#f0f0f0]">
        <header className="flex h-[19px] shrink-0 items-center bg-[#f3f3f3] pl-[2px] text-[#8a8a8a]">
          <AppLogo />
          <h1 className="ml-[5px] flex-1">Без названия - ГАММА</h1>
          <div className="flex items-center gap-[28px] pr-[13px]">
            <button aria-label="Свернуть" className="h-px w-[9px] bg-[#8a8a8a]" />
            <button aria-label="Развернуть">
              <svg width="10" height="10" viewBox="0 0 10 10" fill="none" stroke="#8a8a8a">
                <rect x="0.500" y="2.500" width="6.500" height="6.500" rx="1" />
                <path d="M2.500 .5h5a2 2 0 0 1 2 2v4.500" />
              </svg>
            </button>
            <button aria-label="Закрыть">
              <X size={13} strokeWidth={1.8} />
            </button>
          </div>
        </header>

        <div className="flex h-[27px] shrink-0 items-start bg-[#dadada]">
          <div className="flex h-full w-[707px] shrink-0 items-end pl-[2px] text-[9px]">
            <nav className="flex w-[483px] justify-between">
              {tabs.map(tab => (
                <button
                  key={tab}
                  onClick={() => setActiveTab(tab)}
                  className={`h-[22px] rounded-t-[5px] px-[8px] pt-[2px] ${activeTab === tab ? 'bg-[#f0f0f0]' : ''}`}
                >
                  {tab}
                </button>
              ))}
            </nav>
          </div>
          <div className="flex h-full items-center gap-[9px]">
            {quickTools.map((set, i) => (
              <div key={i} className="flex">
                {set.map(tool => (
                  <button key={tool.label} aria-label={tool.label} className="grid w-[29px] place-items-center">
                    <ToolIcon muted={tool.muted}>{tool.icon}</ToolIcon>
                  </button>
                ))}
              </div>
            ))}
          </div>
          <div className="ml-auto flex h-full">
            {panelTools.map(tool => (
              <button
                key={tool.label}
                aria-label={tool.label}
                className={`grid w-[29px] place-items-center ${tool.pressed ? 'border-t border-l border-[#9c9c9c] bg-[#ececec]' : ''}`}
              >
                <ToolIcon>{tool.icon}</ToolIcon>
              </button>
            ))}
          </div>
          <div className="flex h-[18px] w-[88px] items-center justify-between bg-[#f3f3f3] pr-[6px] pl-[10px] text-[9px] text-[#9a9a9a]">
            <button aria-label="Свернуть ленту">
              <svg width="8" height="6" viewBox="0 0 8 6" fill="none" stroke="#333">
                <path d="M.5 3.500L4 .8l3.500 2.700v1.500L4 3.500.5 5z" />
              </svg>
            </button>
            <a href="#settings">Параметры</a>
          </div>
        </div>

        <Ribbon />

        <div className="flex min-h-0 flex-1 gap-[4px] pt-[3px] pl-[2px]">
          <LeftDock />
          <main className="relative flex-1 bg-white">
            <Scene />
            <Ruler />
            {dialogOpen && <OperationsDialog onClose={() => setDialogOpen(false)} />}
          </main>
        </div>
        <footer className="h-[17px] shrink-0 bg-[#efefef]" />
      </div>
    </div>
  );
};

export default App;
